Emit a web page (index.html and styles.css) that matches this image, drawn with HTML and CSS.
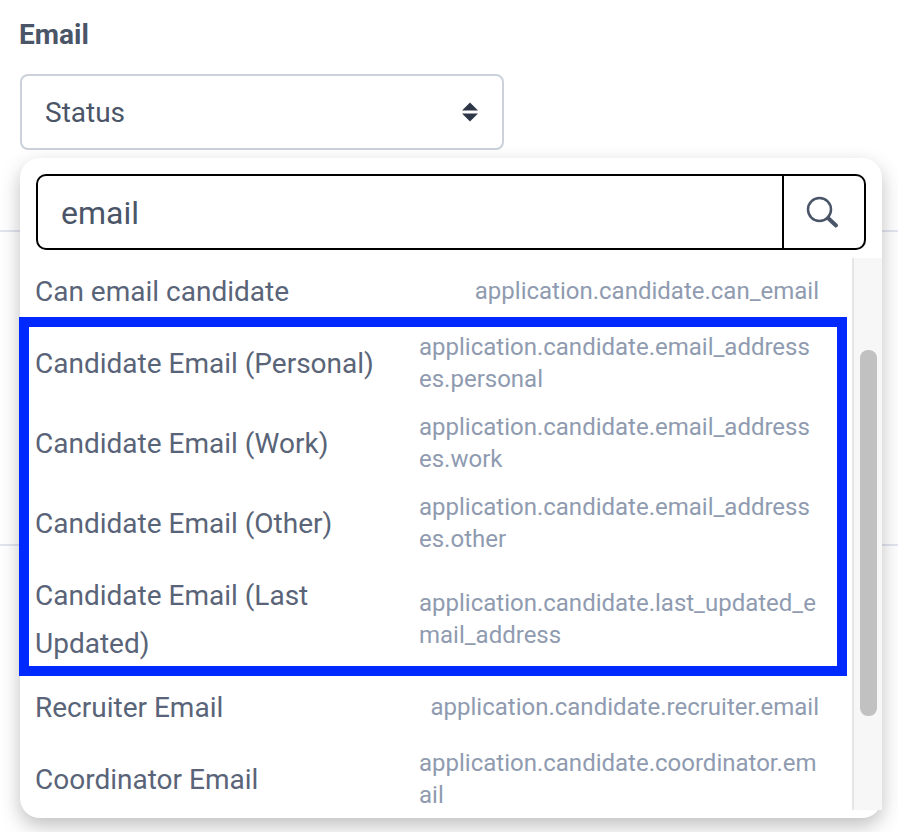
FILE: index.html
```html
<!DOCTYPE html>
<html lang="en">
<head>
    <meta charset="UTF-8">
    <title>Email field</title>
    <link rel="stylesheet" href="styles.css">
</head>
<body>
    <section class="field">
        <div class="field-label">Email</div>
        <div class="select-box">
            <span>Status</span>
            <svg class="sort-icon" width="16" height="20" viewBox="0 0 16 20">
                <path d="M8 0.5 L16 8.5 H0 Z M0 11.5 H16 L8 19.5 Z" fill="#2d3748"/>
            </svg>
        </div>
    </section>
    <div class="divider first"></div>
    <div class="divider second"></div>

    <div class="dropdown">
        <div class="search-box">
            <div class="search-text">email</div>
            <div class="search-button">
                <svg width="34" height="34" viewBox="0 0 34 34" fill="none" stroke="#4a5568">
                    <circle cx="14.5" cy="14.5" r="11.5" stroke-width="2.5"/>
                    <path d="M23 23 L31 30.5" stroke-width="4" stroke-linecap="round"/>
                </svg>
            </div>
        </div>
        <div class="list-wrap">
            <div class="list">
                <div class="row">
                    <div class="row-name">Can email candidate</div>
                    <div class="row-path">application.candidate.can_email</div>
                </div>
                <div class="row">
                    <div class="row-name">Candidate Email (Personal)</div>
                    <div class="row-path">application.candidate.email_addresses.personal</div>
                </div>
                <div class="row">
                    <div class="row-name">Candidate Email (Work)</div>
                    <div class="row-path">application.candidate.email_addresses.work</div>
                </div>
                <div class="row">
                    <div class="row-name">Candidate Email (Other)</div>
                    <div class="row-path">application.candidate.email_addresses.other</div>
                </div>
                <div class="row">
                    <div class="row-name">Candidate Email (Last Updated)</div>
                    <div class="row-path">application.candidate.last_updated_email_address</div>
                </div>
                <div class="row">
                    <div class="row-name">Recruiter Email</div>
                    <div class="row-path">application.candidate.recruiter.email</div>
                </div>
                <div class="row">
                    <div class="row-name">Coordinator Email</div>
                    <div class="row-path">application.candidate.coordinator.email</div>
                </div>
            </div>
            <div class="scrollbar">
                <div class="scroll-thumb"></div>
            </div>
            <div class="highlight"></div>
        </div>
    </div>
</body>
</html>
```

FILE: styles.css
```css
body {
    font-family: Roboto, Arial, sans-serif;
    margin: 0;
    padding: 0;
    background-color: #fff;
    height: 832px;
    overflow: hidden;
    position: relative;
}

.field {
    padding: 19px 20px 0;
}

.field-label {
    font-size: 28px;
    line-height: 32px;
    font-weight: 700;
    color: #4a5568;
    margin-left: -1px;
}

.select-box {
    margin-top: 23px;
    width: 484px;
    height: 76px;
    box-sizing: border-box;
    border: 2px solid #cbd2d9;
    border-radius: 8px;
    padding: 0 24px 0 23px;
    display: flex;
    align-items: center;
    justify-content: space-between;
    font-size: 28px;
    color: #4a5568;
}

.divider {
    position: absolute;
    left: 0;
    right: 0;
    height: 2px;
    background-color: #e2e4f0;
}

.divider.first {
    top: 230px;
}

.divider.second {
    top: 544px;
}

.dropdown {
    position: absolute;
    left: 20px;
    top: 158px;
    width: 862px;
    height: 660px;
    box-sizing: border-box;
    padding: 16px 0 8px;
    background-color: #fff;
    border-radius: 20px;
    box-shadow: 0 8px 20px rgba(0, 0, 0, 0.25);
    display: flex;
    flex-direction: column;
}

.search-box {
    margin: 0 16px;
    height: 76px;
    flex: none;
    box-sizing: border-box;
    border: 2px solid #000;
    border-radius: 10px;
    display: flex;
}

.search-text {
    flex: 1;
    padding-left: 23px;
    font-size: 32px;
    line-height: 74px;
    color: #4a5568;
}

.search-button {
    width: 82px;
    box-sizing: border-box;
    padding-right: 4px;
    border-left: 2px solid #000;
    display: flex;
    align-items: center;
    justify-content: center;
}

.list-wrap {
    flex: 1;
    margin-top: 8px;
    display: flex;
    min-height: 0;
    position: relative;
}

.list {
    flex: 1;
    overflow: hidden;
    padding-top: 1px;
}

.row {
    display: flex;
    justify-content: space-between;
    align-items: center;
    gap: 16px;
    padding: 8px 33px 8px 15px;
}

.row-name {
    font-size: 28px;
    line-height: 48px;
    color: #5a6478;
    margin: 1px 0 -1px;
}

.row-path {
    flex: none;
    max-width: 400px;
    font-size: 24px;
    line-height: 32px;
    color: #8f9bb0;
    word-break: break-all;
}

.highlight {
    position: absolute;
    left: -1px;
    top: 59px;
    width: 828px;
    height: 359px;
    box-sizing: border-box;
    border: 10px solid #0029ff;
}

.scrollbar {
    width: 30px;
    flex: none;
    box-sizing: border-box;
    background-color: #f7f7f7;
    border-left: 2px solid #e6e6e6;
    padding: 92px 5px 0 6px;
}

.scroll-thumb {
    height: 366px;
    border-radius: 8px;
    background-color: #c1c1c1;
}
```
